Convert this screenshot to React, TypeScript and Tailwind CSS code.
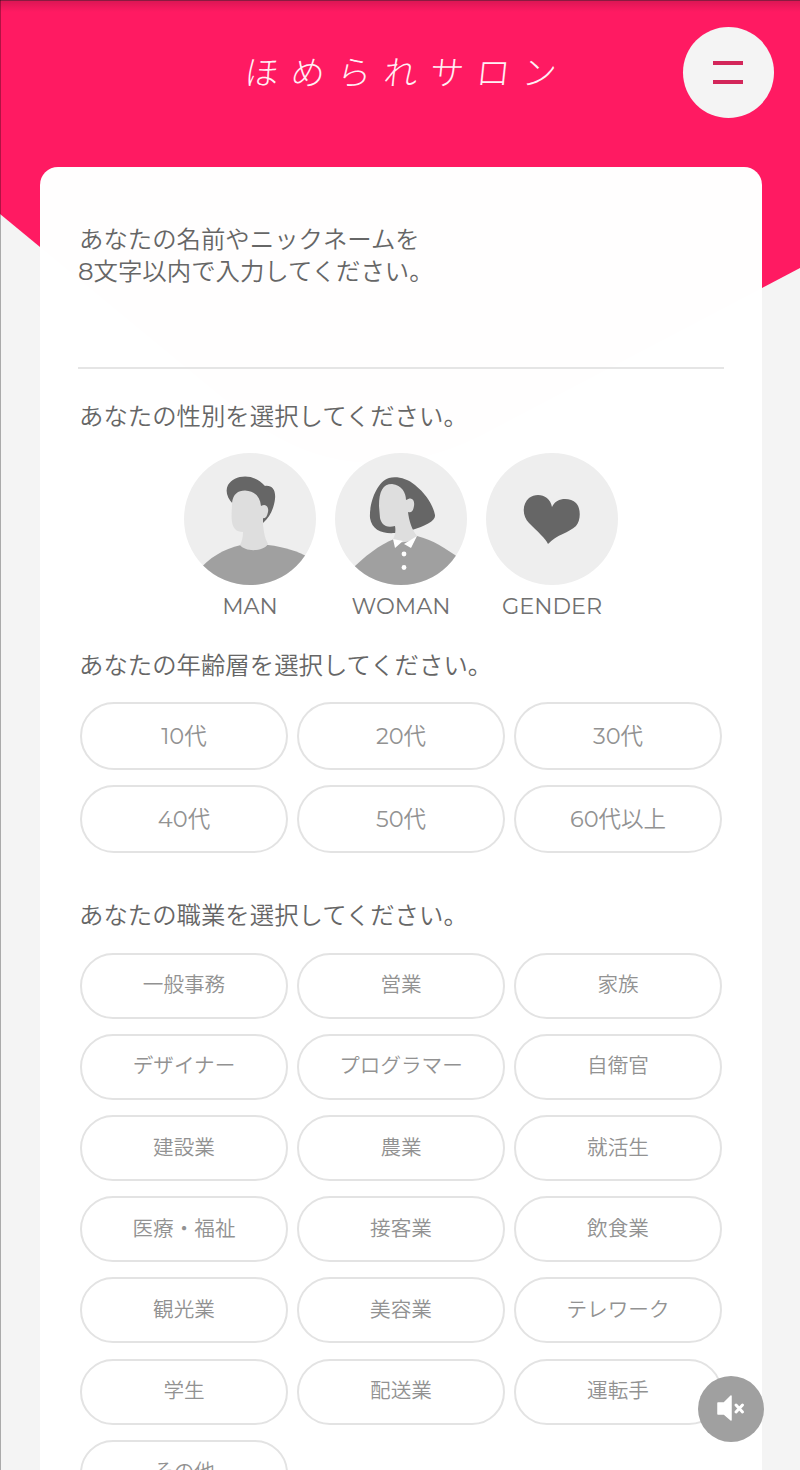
import React from "react";

const ages = [
  ["10", "代"], ["20", "代"], ["30", "代"],
  ["40", "代"], ["50", "代"], ["60", "代以上"],
];

const jobs = [
  "一般事務", "営業", "家族",
  "デザイナー", "プログラマー", "自衛官",
  "建設業", "農業", "就活生",
  "医療・福祉", "接客業", "飲食業",
  "観光業", "美容業", "テレワーク",
  "学生", "配送業", "運転手",
  "その他",
];

function Man() {
  return (
    <svg viewBox="0 0 132 132" className="size-[132px]">
      <defs>
        <clipPath id="man-clip"><circle cx="66" cy="66" r="66" /></clipPath>
      </defs>
      <g clipPath="url(#man-clip)">
        <rect width="132" height="132" fill="#eeeeee" />
        <path d="M14 118C25 105 39 96 57 92H84C101 94 113 98 126 105V132H14Z" fill="#a0a0a0" />
        <path d="M49 51C43 45 41 38 44 32C50 22 69 19 81 33C88 32 92 37 91 46C90 55 86 64 79 70L75 52L55 40Z" fill="#666666" />
        <path d="M48 50C49 41 54 37.500 61 37.500C71 38 76 44 77 53C82 50 85 54 84 59C83 64 81 66 79 65L79 72C80 80 81 86 84 91C79 99 61 99 56 92C58 88 59 84 59 79C52 79 49 75 48 69C47 63 48 57 48 50Z" fill="#dedede" />
      </g>
    </svg>
  );
}

function Woman() {
  return (
    <svg viewBox="0 0 132 132" className="size-[132px]">
      <defs>
        <clipPath id="woman-clip"><circle cx="66" cy="66" r="66" /></clipPath>
      </defs>
      <g clipPath="url(#woman-clip)">
        <rect width="132" height="132" fill="#eeeeee" />
        <path d="M15 118C30 103 44 92 59 86L82 83C98 87 110 95 124 105V132H15Z" fill="#a0a0a0" />
        <path d="M54 25C61 23 72 25 80 32C91 41 98 52 100 62C101 68 90 73 77 77L60 80C47 81 37 77 35 65C34 52 41 29 54 25Z" fill="#666666" />
        <path d="M44 53C44 38 48 31 57 31C67 32 71 40 71 47C77 43 80 47 79 53C78 59 76 60 73 59C74 68 77 77 82 83C76 90 64 91 58 86C60 83 61 78 60 73C50 76 46 70 45 65Z" fill="#dedede" />
        <path d="M58 86L68 88L60 95ZM69 91L82 83L76 95Z" fill="#ffffff" />
        <circle cx="69" cy="101" r="2.400" fill="#ffffff" />
        <circle cx="69" cy="114.500" r="2.400" fill="#ffffff" />
      </g>
    </svg>
  );
}

function Heart() {
  return (
    <svg viewBox="0 0 132 132" className="size-[132px]">
      <circle cx="66" cy="66" r="66" fill="#eeeeee" />
      <path d="M62 91C60 86 51 78 43 70C36 63 36 51 43 45C51 39 64 42 66 54C70 44 84 44 90 50C95 55 95 67 90 73C83 80 71 81 62 91Z" fill="#666666" />
    </svg>
  );
}

const genders = [
  { label: "MAN", art: <Man /> },
  { label: "WOMAN", art: <Woman /> },
  { label: "GENDER", art: <Heart /> },
];

function Question({ children }: { children: React.ReactNode }) {
  return <h2 className="pl-px text-[24.4px] leading-8 font-[350] text-[#666666]">{children}</h2>;
}

export default function App() {
  return (
    <div className="relative h-[1470px] w-[800px] overflow-hidden bg-[#f4f4f4] font-['Montserrat','Inter','Noto_Sans_CJK_JP',sans-serif]">
      <svg className="absolute top-0 left-0" width="800" height="500" viewBox="0 0 800 500">
        <path d="M0 0H800V268L480 436Q350 500 240 412L0 214Z" fill="#ff1a62" />
      </svg>
      <div className="absolute inset-x-0 top-0 h-3 bg-linear-to-b from-black/15 to-transparent" />
      <div className="absolute inset-x-0 top-0 h-px bg-[#8a1a40]" />
      <div className="absolute inset-y-0 left-0 w-px bg-black/30" />

      <div className="relative flex h-full flex-col">
        <header className="flex h-[167px] shrink-0 items-start justify-between pr-[26.5px] pl-[245px]">
          <h1 className="mt-[47px] -skew-x-[6deg] font-['Noto_Sans_CJK_JP',sans-serif] text-[34px] leading-[48px] font-light tracking-[12.3px] whitespace-nowrap text-[#fff0f5]">
            ほめられサロン
          </h1>
          <button aria-label="メニュー" className="mt-[27px] flex size-[91px] shrink-0 flex-col items-center justify-center gap-[15px] rounded-full bg-[#f4f4f4]">
            <span className="h-1 w-[30px] bg-[#d3265a]" />
            <span className="h-1 w-[30px] bg-[#d3265a]" />
          </button>
        </header>

        <main className="ml-10 flex w-[722px] grow flex-col rounded-t-[18px] bg-white/[0.995] px-[38px] pt-[56px]">
          <Question>あなたの名前やニックネームを<br /><span className="-ml-px font-normal">8</span>文字以内で入力してください。</Question>
          <div className="h-[82px] border-b-2 border-[#e5e5e5]" />

          <div className="mt-[31px]"><Question>あなたの性別を選択してください。</Question></div>
          <div className="mt-[21px] flex justify-center gap-[19px]">
            {genders.map((g) => (
              <div key={g.label} className="flex w-[132px] flex-col items-center">
                {g.art}
                <span className="mt-[5px] text-[22.4px] leading-8 font-normal text-[#707070]">{g.label}</span>
              </div>
            ))}
          </div>

          <div className="mt-[27px]"><Question>あなたの年齢層を選択してください。</Question></div>
          <div className="mt-[21px] ml-0.5 grid w-[642px] grid-cols-3 gap-x-[9px] gap-y-[15px]">
            {ages.map(([n, unit]) => (
              <button key={n} className="h-[68px] rounded-full border-2 border-[#e3e3e3] bg-white pt-0.5 text-[22.5px] font-[350] text-[#929292]"><span className="font-normal">{n}</span>{unit}</button>
            ))}
          </div>

          <div className="mt-[46px]"><Question>あなたの職業を選択してください。</Question></div>
          <div className="mt-[21.6px] ml-0.5 grid w-[642px] grid-cols-3 gap-x-[9px] gap-y-[15.2px]">
            {jobs.map((j) => (
              <button key={j} className="h-[66px] rounded-full border-2 border-[#e3e3e3] bg-white text-[20.6px] font-[350] text-[#929292]">{j}</button>
            ))}
          </div>
        </main>
      </div>

      <button aria-label="ミュート" className="absolute top-[1376px] left-[698px] size-[66px] rounded-full bg-[#a0a0a0]">
        <svg viewBox="0 0 66 66" className="size-full">
          <path d="M20 27H26L33 20V44L26 38H20Z" fill="#fff" stroke="#fff" strokeWidth="1.500" strokeLinejoin="round" />
          <path d="M38 29L44.500 36M44.500 29L38 36" stroke="#fff" strokeWidth="3" strokeLinecap="round" />
        </svg>
      </button>
    </div>
  );
}
